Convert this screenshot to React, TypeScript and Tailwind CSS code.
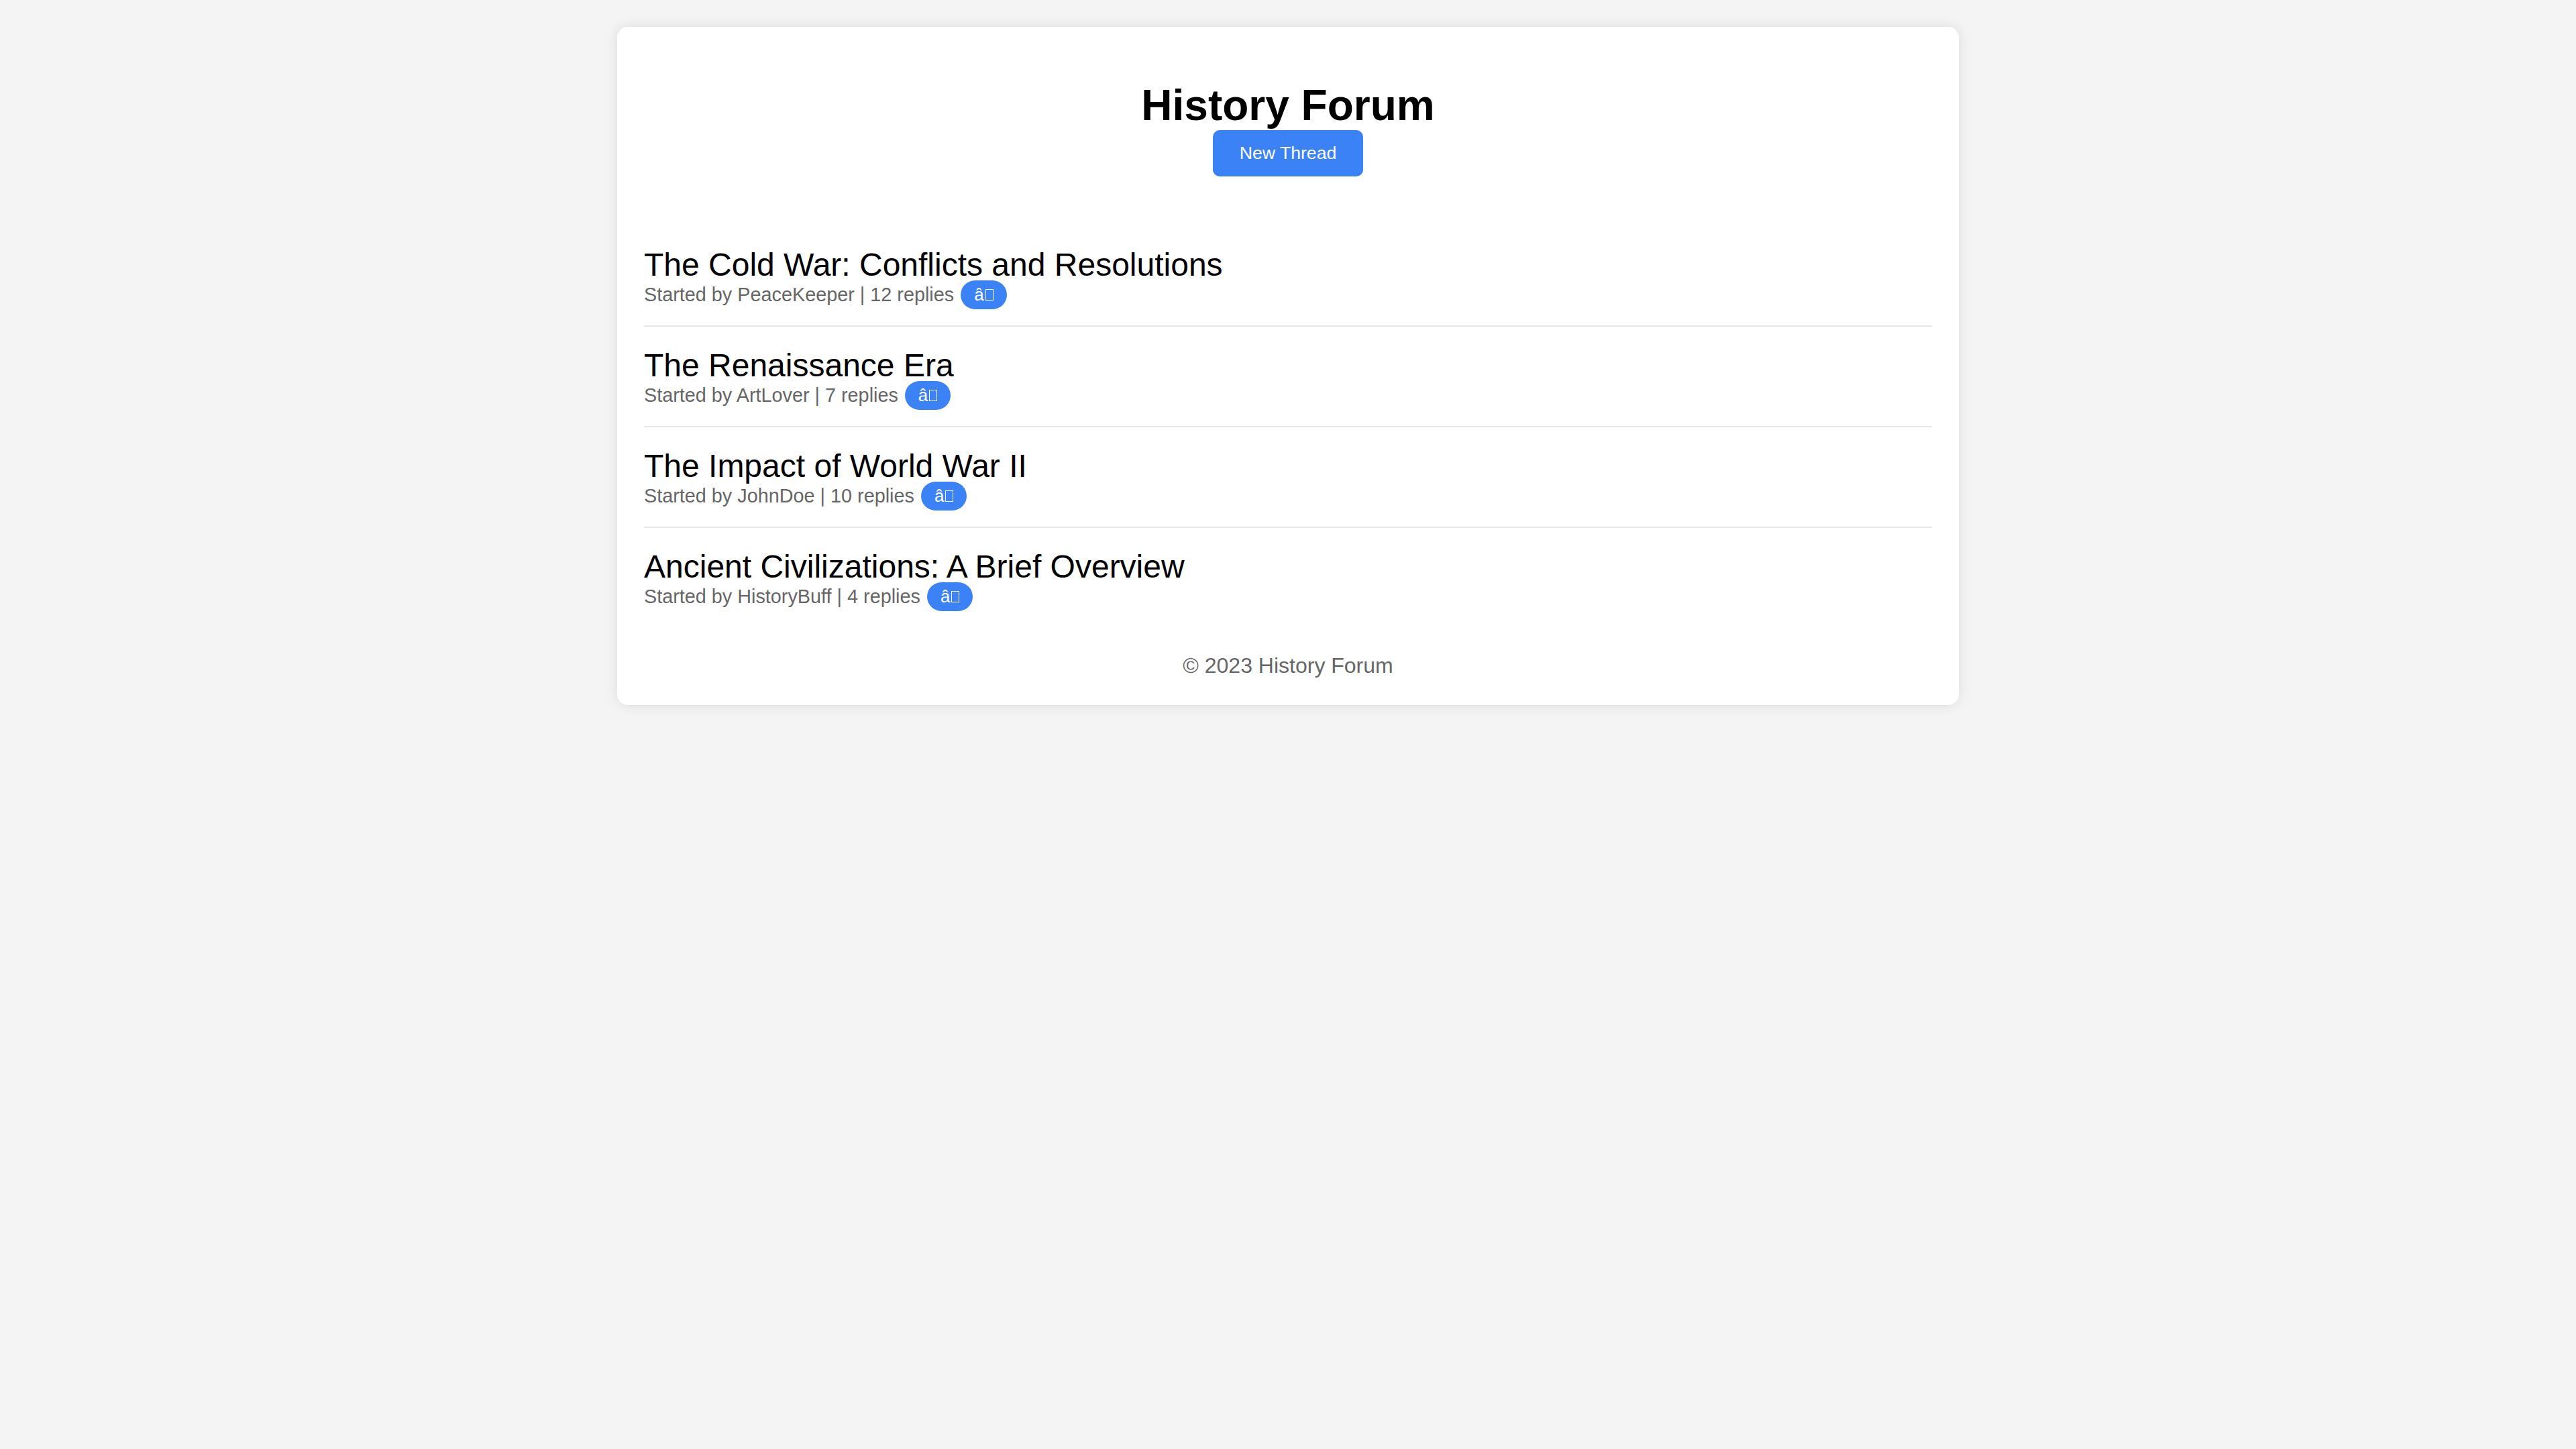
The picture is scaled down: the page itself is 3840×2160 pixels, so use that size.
import React from 'react';

type Thread = {
  id: number;
  title: string;
  author: string;
  replies: number;
};

const threads: Thread[] = [
  { id: 1, title: 'The Cold War: Conflicts and Resolutions', author: 'PeaceKeeper', replies: 12 },
  { id: 2, title: 'The Renaissance Era', author: 'ArtLover', replies: 7 },
  { id: 3, title: 'The Impact of World War II', author: 'JohnDoe', replies: 10 },
  { id: 4, title: 'Ancient Civilizations: A Brief Overview', author: 'HistoryBuff', replies: 4 },
];

const ThreadRow: React.FC<{ thread: Thread }> = ({ thread }) => {
  return (
    <li className="pt-[34px] pb-[26px] border-b-2 border-[#e6e6e6] last:border-b-0">
      <h2 className="text-[48px] leading-[48px] font-normal text-black">{thread.title}</h2>
      <div className="h-[40px] flex items-center gap-[10px]">
        <span className="text-[28.8px] leading-[33px] text-[#666] whitespace-nowrap">
          Started by {thread.author} | {thread.replies} replies
        </span>
        {/* like button, its emoji comes out garbled in the original */}
        <button className="shrink-0 h-[43px] px-[20px] rounded-full bg-[#3b82f6] text-white text-[26px] leading-[30px] flex items-center gap-[2px]">
          â<span className="inline-block w-[12px] h-[17px] border-[1.5px] border-white" />
        </button>
      </div>
    </li>
  );
};

export default function App() {
  return (
    <div className="min-h-[2160px] bg-[#f4f4f4] pt-[40px] font-['Liberation_Sans',Arial,Helvetica,sans-serif]">
      <div className="w-[2000px] mx-auto bg-white rounded-[16px] shadow-[0_0_20px_rgba(0,0,0,0.1)] px-[40px] pt-[40px] pb-[40px]">
        {/* Header */}
        <header className="flex flex-col items-center mb-[74px]">
          <h1 className="mt-[40px] text-[64px] leading-[74px] font-bold text-black">History Forum</h1>
          <button className="bg-[#3b82f6] text-white text-[26.67px] leading-[29px] px-[40px] py-[20px] rounded-[10px]">
            New Thread
          </button>
        </header>

        {/* Threads */}
        <ul>
          {threads.map((thread) => (
            <ThreadRow key={thread.id} thread={thread} />
          ))}
        </ul>

        {/* Footer */}
        <footer className="mt-[39px] text-center text-[32px] leading-[37px] text-[#666]">
          © 2023 History Forum
        </footer>
      </div>
    </div>
  );
}
